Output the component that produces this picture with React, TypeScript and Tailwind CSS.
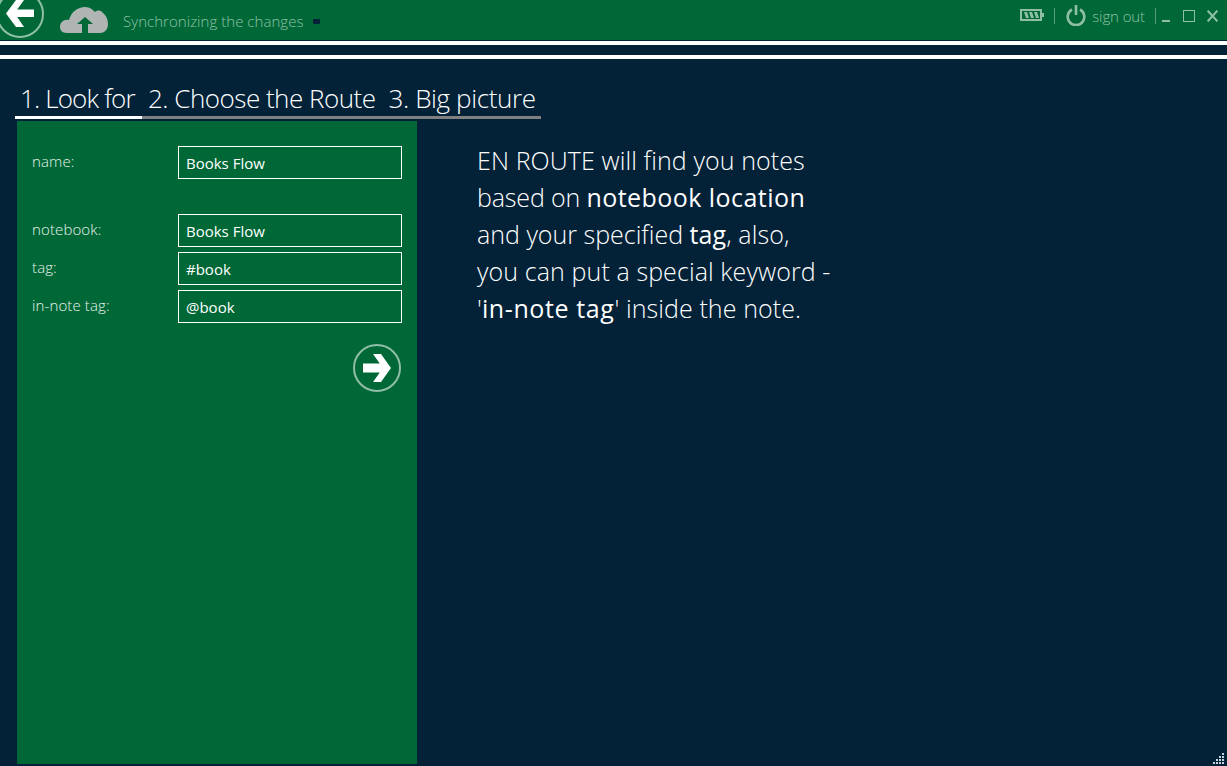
import React from 'react';

const fields = [
  { label: 'notebook:', value: 'Books Flow' },
  { label: 'tag:', value: '#book' },
  { label: 'in-note tag:', value: '@book' },
];

const FieldRow: React.FC<{ label: string; value: string }> = ({ label, value }) => (
  <div className="flex h-[33px]">
    <label className="w-[146px] pt-[4px] text-[15px] leading-[22px] font-light tracking-[0.12px] text-[#e8f3ec]">{label}</label>
    <input
      readOnly
      value={value}
      className="w-[224px] h-[33px] border border-white bg-transparent px-[7px] pt-[1px] text-[15px] text-white outline-none"
    />
  </div>
);

export default function App() {
  return (
    <div className="h-[766px] w-[1227px] overflow-hidden bg-[#032238] font-['Open_Sans',sans-serif] relative">
      {/* top bar */}
      <div className="relative flex h-[41px] items-center overflow-hidden border-b border-[#032238] bg-[#006837]">
        <svg className="absolute left-[-4px] top-[-10px]" width="48" height="48" viewBox="0 0 48 48">
          <circle cx="24" cy="24" r="23" fill="none" stroke="#8fbfa6" strokeWidth="2" />
          <path d="M10 23.500 L20 10 L28 10 L21.200 19.500 L38 19.500 L38 27 L21.200 27 L28 37 L20 37 Z" fill="#fff" />
        </svg>
        <svg className="ml-[60px] mt-[1px]" width="49" height="27" viewBox="0 0 49 27">
          <path
            d="M7 26 C2 26 0 23 0 20 C0 15 4 12 9 13 C11 5 18 0 25 0 C30 0 33 3 35 5 C37 3 40 3 42 5 C46 8 48 12 48 17 C48 23 44 26 40 26 Z"
            fill="#b0b5b3"
          />
          <path d="M25 10 L33 17 L28 17 L28 26 L22 26 L22 17 L17 17 Z" fill="#006837" />
        </svg>
        <span className="ml-[14px] mt-[2px] text-[15px] font-light tracking-[0.04px] text-[#8fc0a6]">
          Synchronizing the changes
        </span>
        <span className="ml-[10px] mt-[2px] h-[5px] w-[7px] rounded-[1px] bg-[#032238]" />

        <div className="mb-[8px] ml-auto flex items-center pr-[9px] text-[#8fc0a6]">
          <svg className="mt-[-2px]" width="24" height="12" viewBox="0 0 24 12">
            <rect x="1" y="1" width="20" height="10" fill="none" stroke="#8fc0a6" strokeWidth="2" />
            <rect x="21" y="4" width="3" height="4" fill="#8fc0a6" />
            <path d="M4 3 h3 l2 6 h-3 Z M9 3 h3 l2 6 h-3 Z M14 3 h3 l2 6 h-3 Z" fill="#8fc0a6" />
          </svg>
          <span className="ml-[10px] h-[16px] w-px bg-[#5c9c7d]" />
          <svg className="ml-[11px] mt-[-2px]" width="20" height="21" viewBox="0 0 20 21">
            <path d="M6 4.500 A8.300 8.300 0 1 0 14 4.500" fill="none" stroke="#8fc0a6" strokeWidth="2.600" />
            <path d="M10 0 V10" stroke="#8fc0a6" strokeWidth="2.600" />
          </svg>
          <span className="ml-[6px] text-[15px] font-light tracking-[-0.1px]">sign out</span>
          <span className="ml-[10px] h-[16px] w-px bg-[#5c9c7d]" />
          <span className="ml-[6px] mt-[9px] h-[2px] w-[8px] bg-[#8fc0a6]" />
          <span className="ml-[13px] h-[12px] w-[12px] border-[1.500px] border-[#8fc0a6]" />
          <svg className="ml-[12px]" width="11" height="12" viewBox="0 0 11 12">
            <path d="M0.700 0.700 L10.300 11.300 M10.300 0.700 L0.700 11.300" stroke="#8fc0a6" strokeWidth="2" />
          </svg>
        </div>
      </div>

      {/* double rule */}
      <div className="h-[4px] bg-white" />
      <div className="mt-[10px] h-[4px] bg-white" />

      {/* steps */}
      <div className="ml-[15px] mt-[23px] flex w-[526px] text-[26px] leading-[32px] font-light text-white">
        <div className="w-[127px] whitespace-nowrap border-b-[3px] border-white pb-[2px] pl-[5px] tracking-[-0.85px]">
          1. Look for
        </div>
        <div className="flex-1 whitespace-nowrap border-b-[3px] border-[#808080] pb-[2px] pl-[6px]">
          <span className="tracking-[-0.5px]">2. Choose the Route</span>
          <span className="ml-[13px] tracking-[-0.38px]">3. Big picture</span>
        </div>
      </div>

      <div className="flex">
        {/* form panel */}
        <div className="ml-[17px] mt-[2px] h-[643px] w-[400px] bg-[#006837] pl-[15px] pr-[15px] pt-[25px]">
          <FieldRow label="name:" value="Books Flow" />
          <div className="mt-[35px] flex flex-col gap-[5px]">
            {fields.map((f) => (
              <FieldRow key={f.label} label={f.label} value={f.value} />
            ))}
          </div>
          <div className="mt-[21px] flex justify-end pr-px">
            <svg width="48" height="48" viewBox="0 0 48 48">
              <circle cx="24" cy="24" r="23" fill="none" stroke="#8fbfa6" strokeWidth="2" />
              <path d="M38 24 L28 10 L20 10 L26.800 19.500 L10 19.500 L10 28.500 L26.800 28.500 L20 38 L28 38 Z" fill="#fff" />
            </svg>
          </div>
        </div>

        {/* help text */}
        <div className="ml-[60px] mt-[23px] text-[25px] leading-[37px] font-light tracking-[0.1px] text-white whitespace-nowrap">
          <p>EN ROUTE will find you notes</p>
          <p>
            <span className="tracking-[-0.15px]">based on </span>
            <b className="font-normal tracking-[0.45px]">notebook location</b>
          </p>
          <p>
            <span className="tracking-[0px]">and your specified </span>
            <b className="font-normal">tag</b>, also,
          </p>
          <p>you can put a special keyword -</p>
          <p>
            '<b className="font-normal tracking-[0.6px]">in-note tag</b>' inside the note.
          </p>
        </div>
      </div>

      {/* resize grip */}
      <svg className="absolute bottom-[1px] right-[2px]" width="12" height="12" viewBox="0 0 12 12" fill="#c5d3dc">
        <rect x="9" y="0" width="2" height="2" />
        <rect x="6" y="3" width="2" height="2" />
        <rect x="9" y="3" width="2" height="2" />
        <rect x="3" y="6" width="2" height="2" />
        <rect x="6" y="6" width="2" height="2" />
        <rect x="9" y="6" width="2" height="2" />
        <rect x="0" y="9" width="2" height="2" />
        <rect x="3" y="9" width="2" height="2" />
        <rect x="6" y="9" width="2" height="2" />
        <rect x="9" y="9" width="2" height="2" />
      </svg>
    </div>
  );
}
